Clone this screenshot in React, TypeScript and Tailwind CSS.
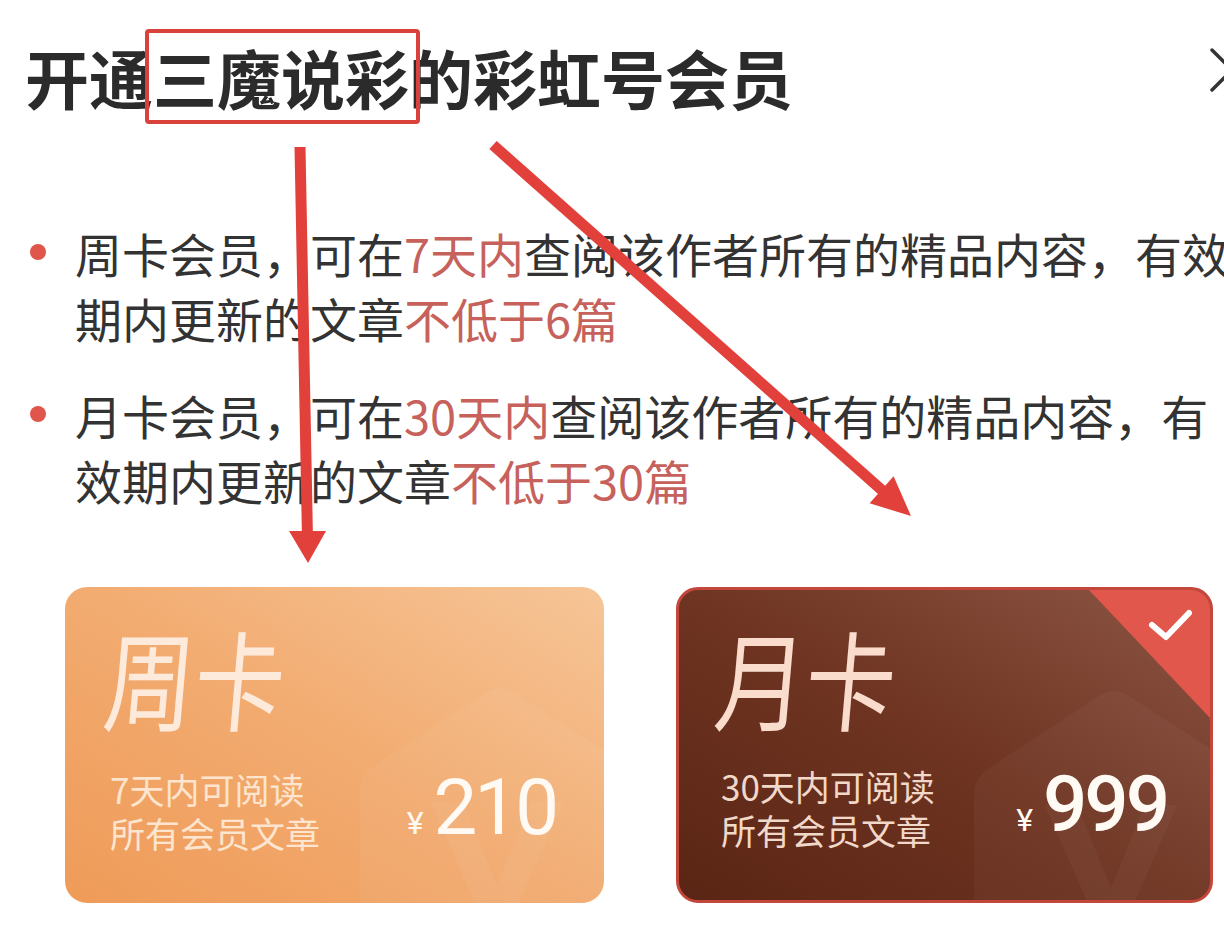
import React from 'react';

type Bullet = { lines: React.ReactNode[] };

const Hi = ({ children }: { children: React.ReactNode }) => (
  <span className="text-[#c6615c]">{children}</span>
);

const bullets: Bullet[] = [
  {
    lines: [
      <>周卡会员，可在<Hi>7天内</Hi>查阅该作者所有的精品内容，有效</>,
      <>期内更新的文章<Hi>不低于6篇</Hi></>,
    ],
  },
  {
    lines: [
      <>月卡会员，可在<Hi>30天内</Hi>查阅该作者所有的精品内容，有</>,
      <>效期内更新的文章<Hi>不低于30篇</Hi></>,
    ],
  },
];

function Watermark({ opacity }: { opacity: number }) {
  return (
    <svg className="absolute inset-0 pointer-events-none" width="539" height="316" viewBox="0 0 539 316">
      <path
        d="M295 205 Q295 188 310 178 L420 106 Q435 96 450 106 L580 190 L580 340 L295 340 Z"
        fill="#ffffff"
        opacity={opacity}
      />
      <path d="M366 215 L398 215 L432 298 L466 215 L498 215 L448 330 L416 330 Z" fill="#ffffff" opacity={opacity} />
    </svg>
  );
}

function Card({
  title,
  sub,
  price,
  selected,
}: {
  title: string;
  sub: string;
  price: string;
  selected?: boolean;
}) {
  return (
    <div
      className={
        selected
          ? 'relative w-[537px] h-[316px] rounded-[22px] overflow-hidden border-[3px] border-[#c4473b] bg-linear-to-tr from-[#5a2514] via-[#6f3422] to-[#8d5645]'
          : 'relative w-[539px] h-[316px] rounded-[22px] overflow-hidden bg-linear-to-tr from-[#ef9b58] via-[#f2ab70] to-[#f6c597]'
      }
    >
      <Watermark opacity={selected ? 0.035 : 0.045} />
      {selected && (
        <svg className="absolute top-0 right-0" width="121" height="128" viewBox="0 0 121 128">
          <polygon points="0,0 121,0 121,128" fill="#e2574c" />
          <polyline
            points="63,35 77,47 100,23"
            fill="none"
            stroke="#ffffff"
            strokeWidth="6"
            strokeLinecap="round"
            strokeLinejoin="round"
          />
        </svg>
      )}
      <div className={selected ? 'relative flex flex-col h-full pl-[42px] pr-[43px]' : 'relative flex flex-col h-full pl-[45px] pr-[48px]'}>
        <div
          className={
            selected
              ? 'mt-[32px] h-[90px] text-[90px] leading-[90px] text-[#f9dccb] -skew-x-[6deg] scale-y-[1.2] origin-top'
              : 'mt-[35px] h-[90px] text-[90px] leading-[90px] text-[#fdeadb] -skew-x-[6deg] scale-y-[1.2] origin-top'
          }
        >
          {title}
        </div>
        <div className="mt-auto mb-[48px] flex items-end justify-between">
          <div className={selected ? 'text-[35px] leading-[44px] text-[#f2d8c9]' : 'text-[35px] leading-[44px] text-[#fde5cf]'}>
            {sub.split('\n').map((l) => (
              <div key={l}>{l}</div>
            ))}
          </div>
          <div className="flex items-baseline mb-[8px] font-['Roboto',sans-serif] text-[#fffaf4]">
            <span className="text-[32px] mr-[10px]">¥</span>
            <span className={selected ? 'text-[78px] leading-[78px] tracking-[-3px] font-medium' : 'text-[78px] leading-[78px] tracking-[-3px]'}>
              {price}
            </span>
          </div>
        </div>
      </div>
    </div>
  );
}

function Annotations() {
  return (
    <svg className="absolute inset-0 pointer-events-none" width="1224" height="936" viewBox="0 0 1224 936">
      <rect x="147" y="31" width="271" height="91" rx="2" fill="none" stroke="#d9423b" strokeWidth="4" />
      <line x1="300" y1="147" x2="307.4" y2="534" stroke="#e2403a" strokeWidth="11" />
      <polygon points="289,531 326,531 308,563" fill="#e2403a" />
      <line x1="493" y1="145" x2="884" y2="492" stroke="#e2403a" strokeWidth="11" />
      <polygon points="869.6,503.3 893.6,476.3 911,516" fill="#e2403a" />
    </svg>
  );
}

export default function App() {
  return (
    <div className="relative w-[1224px] h-[936px] overflow-hidden bg-white font-['Noto_Sans_CJK_SC',sans-serif] text-[#333333]">
      <header className="flex items-start justify-between pl-[25px] pt-[44px]">
        <h1 className="text-[64px] leading-[64px] font-bold text-[#2b2b2b] whitespace-nowrap">
          开通三魔说彩的彩虹号会员
        </h1>
        <svg className="mr-[-30px] mt-[4px]" width="44" height="44" viewBox="0 0 44 44">
          <path d="M2 2 L42 42 M2 42 L42 2" stroke="#333333" strokeWidth="3.5" strokeLinecap="round" />
        </svg>
      </header>

      <ul className="mt-[112px] flex flex-col gap-[32px]">
        {bullets.map((b, i) => (
          <li key={i} className="flex items-start">
            <span className="ml-[30px] mt-[24px] w-[16px] h-[16px] rounded-full bg-[#e0564d] shrink-0" />
            <div className="ml-[29px] text-[47px] leading-[65px] whitespace-nowrap">
              {b.lines.map((l, j) => (
                <div key={j}>{l}</div>
              ))}
            </div>
          </li>
        ))}
      </ul>

      <div className="mt-[75px] flex pl-[65px] gap-[72px]">
        <Card title="周卡" sub={'7天内可阅读\n所有会员文章'} price="210" />
        <Card title="月卡" sub={'30天内可阅读\n所有会员文章'} price="999" selected />
      </div>

      <Annotations />
    </div>
  );
}
